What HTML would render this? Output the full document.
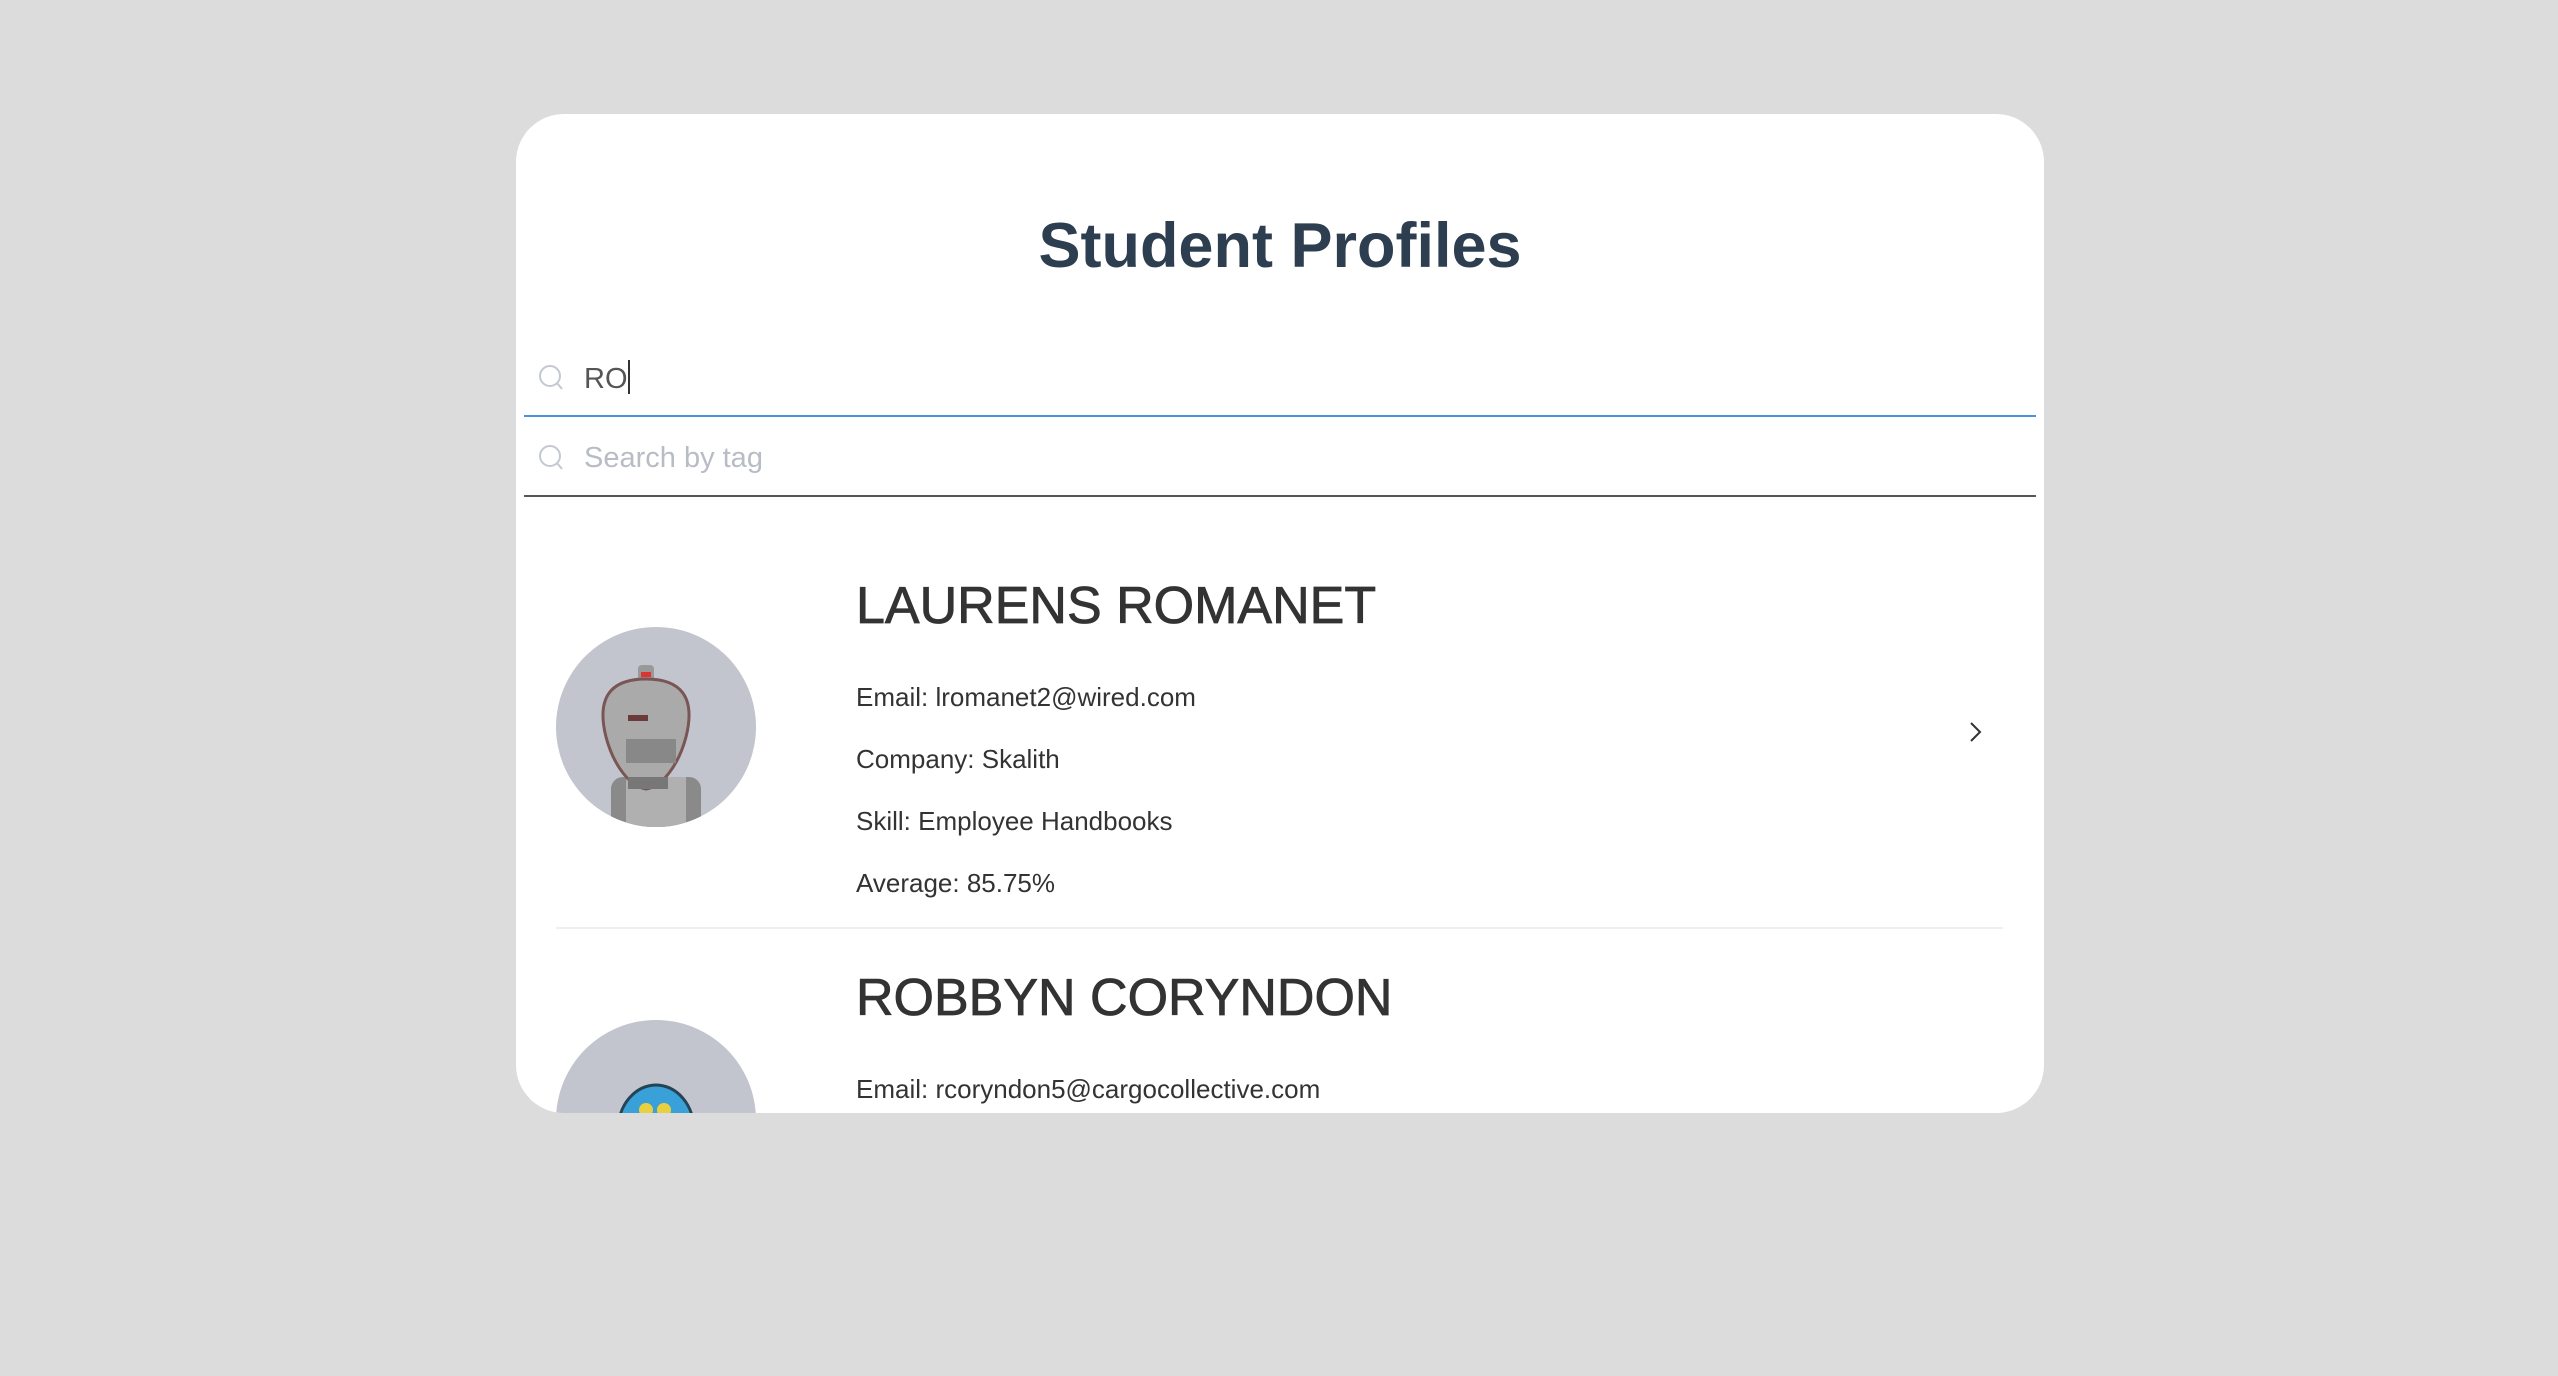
<!DOCTYPE html>
<html><head><meta charset="utf-8"><style>
*{margin:0;padding:0;box-sizing:border-box}
body{width:2558px;height:1376px;background:#dcdcdc;font-family:"Liberation Sans",sans-serif;position:relative;overflow:hidden}
.card{position:absolute;left:516px;top:114px;width:1528px;height:999px;background:#fff;border-radius:48px;overflow:hidden}
.a{position:absolute;white-space:nowrap}
h1{position:absolute;left:0;width:1528px;text-align:center;font-size:63px;font-weight:bold;color:#2c3e50;line-height:1}
.name{font-size:52px;color:#333;line-height:1;-webkit-text-stroke:0.8px #333}
.d{font-size:26px;color:#333;line-height:1}
</style></head><body>
<div class="card">
<h1 style="top:101px">Student Profiles</h1>
<svg class="a" style="left:22px;top:250px" width="26" height="28" viewBox="0 0 26 28"><circle cx="12" cy="12" r="10" fill="none" stroke="#c4c8d0" stroke-width="2"/><line x1="19" y1="19" x2="24" y2="25" stroke="#c4c8d0" stroke-width="2"/></svg>
<div class="a" style="left:68px;top:246px;font-size:29px;color:#555">RO<span style="display:inline-block;width:2px;height:34px;background:#333;vertical-align:-6px"></span></div>
<div class="a" style="left:8px;top:301px;width:1512px;height:2px;background:#4a90e2"></div>
<svg class="a" style="left:22px;top:330px" width="26" height="28" viewBox="0 0 26 28"><circle cx="12" cy="12" r="10" fill="none" stroke="#c4c8d0" stroke-width="2"/><line x1="19" y1="19" x2="24" y2="25" stroke="#c4c8d0" stroke-width="2"/></svg>
<div class="a" style="left:68px;top:328px;font-size:29px;color:#b8bcc4">Search by tag</div>
<div class="a" style="left:8px;top:381px;width:1512px;height:2px;background:#555"></div>

<svg class="a" style="left:40px;top:513px" width="200" height="200" viewBox="0 0 200 200">
<defs><clipPath id="c1"><circle cx="100" cy="100" r="100"/></clipPath></defs>
<g clip-path="url(#c1)"><rect width="200" height="200" fill="#c2c5cd"/>
<rect x="55" y="150" width="90" height="60" rx="12" fill="#8a8a8a"/><rect x="70" y="150" width="60" height="60" fill="#b0b0b0"/>
<rect x="82" y="38" width="16" height="16" rx="4" fill="#999"/><rect x="85" y="45" width="10" height="5" fill="#d33"/>
<path d="M90 52 C55 52 40 70 50 110 C58 140 75 160 90 162 C105 160 122 140 130 110 C140 70 125 52 90 52Z" fill="#aaa" stroke="#7a5555" stroke-width="3"/>
<rect x="72" y="88" width="20" height="6" fill="#6b3b3b"/><rect x="70" y="112" width="50" height="24" fill="#888"/>
<rect x="72" y="150" width="40" height="12" fill="#777"/></g></svg>
<div class="a name" style="left:340px;top:466px">LAURENS ROMANET</div>
<div class="a d" style="left:340px;top:570px">Email: lromanet2@wired.com</div>
<div class="a d" style="left:340px;top:632px">Company: Skalith</div>
<div class="a d" style="left:340px;top:694px">Skill: Employee Handbooks</div>
<div class="a d" style="left:340px;top:756px">Average: 85.75%</div>
<svg class="a" style="left:1452px;top:606px" width="16" height="24" viewBox="0 0 16 24"><path d="M3 3 L12 12 L3 21" fill="none" stroke="#333" stroke-width="2"/></svg>
<div class="a" style="left:40px;top:813px;width:1447px;height:2px;background:#eceff3"></div>

<svg class="a" style="left:40px;top:906px" width="200" height="200" viewBox="0 0 200 200">
<defs><clipPath id="c2"><circle cx="100" cy="100" r="100"/></clipPath></defs>
<g clip-path="url(#c2)"><rect width="200" height="200" fill="#c2c5cd"/>
<ellipse cx="100" cy="110" rx="38" ry="45" fill="#3aa0d8" stroke="#245" stroke-width="3"/>
<circle cx="90" cy="90" r="7" fill="#e8d040"/><circle cx="108" cy="90" r="7" fill="#e8d040"/></g></svg>
<div class="a name" style="left:340px;top:858px">ROBBYN CORYNDON</div>
<div class="a d" style="left:340px;top:962px">Email: rcoryndon5@cargocollective.com</div>
</div>
</body></html>
